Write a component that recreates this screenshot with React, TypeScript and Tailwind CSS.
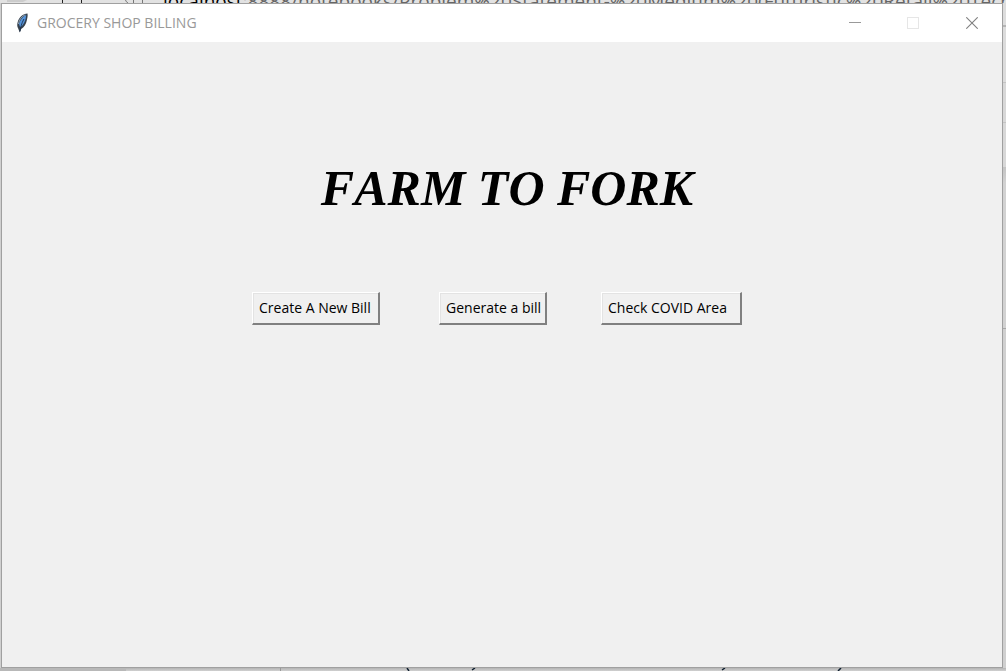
import type { ReactNode } from "react";

function FeatherIcon() {
  return (
    <svg className="h-5 w-4 shrink-0" viewBox="0 0 16 20" aria-hidden="true">
      <path d="M13.5 0.5 C9 0.5 5 4.5 3.7 9 C3 11.5 3 13.8 4.2 15.5 L5.7 19.5 L7.2 16 C10 14.5 12.2 11 12.8 7.5 C13.3 5 14 3 13.5 0.5Z" fill="#36414d" />
      <path d="M12.2 2 C8.5 3.5 6 7.5 5 11 L6.2 14.2 C9.8 12 11.7 7.5 12.2 2Z" fill="#5594dc" />
      <path d="M10 6 C8.5 8.5 7 12 6 18.5" fill="none" stroke="#1b3048" strokeWidth="0.9" />
      <path d="M11.3 1.8 C7.8 3 5.2 6.5 4.4 11" fill="none" stroke="#9aa9b8" strokeWidth="0.9" />
    </svg>
  );
}

function TitleBar() {
  return (
    <header className="flex h-[38px] shrink-0 items-center bg-white pl-3">
      <FeatherIcon />
      <h2 className="grow pb-px pl-[7px] text-sm leading-5 text-[#999999]">GROCERY SHOP BILLING</h2>
      <button type="button" aria-label="Minimize" className="flex h-full w-[58px] items-center justify-center">
        <svg className="size-3" viewBox="0 0 12 12" shapeRendering="crispEdges">
          <path d="M0 5.5H12" stroke="#999999" />
        </svg>
      </button>
      <button type="button" aria-label="Maximize" disabled className="flex h-full w-[58px] items-center justify-center">
        <svg className="size-3" viewBox="0 0 12 12" fill="none" shapeRendering="crispEdges">
          <rect x="0.5" y="0.5" width="11" height="11" stroke="#e6e6e6" />
        </svg>
      </button>
      <button type="button" aria-label="Close" className="flex h-full w-[60px] items-center justify-center">
        <svg className="size-3" viewBox="0 0 12 12" fill="none">
          <path d="M0.3 0.3L11.7 11.7M11.7 0.3L0.3 11.7" stroke="#808080" strokeWidth="1.1" />
        </svg>
      </button>
    </header>
  );
}

function ActionButton({ children, className }: { children: ReactNode; className: string }) {
  return (
    <button
      type="button"
      className={`h-[33px] whitespace-nowrap border-t border-l border-r-2 border-b-2 border-t-white border-l-white border-r-[#808080] border-b-[#808080] bg-[#f0f0f0] pb-px pl-[6px] text-left text-sm leading-5 text-black shadow-[inset_1px_1px_0_#e3e3e3] ${className}`}
    >
      {children}
    </button>
  );
}

export default function App() {
  return (
    <div className="flex h-screen flex-col overflow-hidden bg-[#d0d0d0] font-['Open_Sans','Noto_Sans',sans-serif]">
      <div className="flex h-[3px] shrink-0 overflow-hidden bg-[#e2e2e2]">
        <svg className="h-[3px] w-[163px] shrink-0" viewBox="0 0 163 3" fill="none" aria-hidden="true">
          <path d="M7 0H27L23 2H7Z" fill="#cccccc" />
          <path d="M62.5 0V3M81.5 0V3" stroke="#222222" />
          <path d="M125.5 0Q126 2 128 3M133.5 0V3M142.5 0V3" stroke="#777777" />
        </svg>
        <p className="-mt-[11px] whitespace-nowrap text-[19px] leading-6 text-[#666666]">
          <span className="text-black">localhost</span>:8888/notebooks/Problem%20Statement-%20Medium%20(Futuristic%20Retail%20Tech
        </p>
      </div>
      <div className="flex min-h-0 grow pl-px">
        <main className="flex grow flex-col border border-[#a0a0a0] bg-[#f0f0f0]">
          <TitleBar />
          <div className="flex grow flex-col items-center pt-[116px]">
            <h1 className="pl-[10px] font-['Liberation_Serif',serif] text-[50px] leading-[60px] font-bold italic text-black [font-kerning:none]">FARM TO FORK</h1>
            <div className="mt-[74px] flex pr-[10px]">
              <ActionButton className="w-32">Create A New Bill</ActionButton>
              <ActionButton className="ml-[59px] w-[108px]">Generate a bill</ActionButton>
              <ActionButton className="ml-[54px] w-[141px]">Check COVID Area</ActionButton>
            </div>
          </div>
        </main>
        <div className="flex w-[3px] shrink-0 flex-col">
          <div className="h-6 border-b-2 border-[#b5b5b5] bg-[#dddddd]" />
          <div className="h-14 border-b border-[#c4c4c4] bg-[#dcdcdc]" />
          <div className="h-10 border-b border-[#c4c4c4] bg-[#d8d8d8]" />
          <div className="h-11 bg-[#d8d8d8]" />
          <div className="h-[162px] border-b border-[#a8a8a8] bg-linear-to-b from-[#c4c4c4] to-[#d2d2d2] to-10%" />
          <div className="grow bg-[#d0d0d0]" />
        </div>
      </div>
      <div className="flex h-[3px] shrink-0 bg-linear-to-b from-[#b4b4b4] to-[#d0d0d0]">
        <div className="w-[126px] bg-[#b8b8b8]" />
        <div className="w-[155px] border-r border-[#999999]" />
        <svg className="h-[3px] w-[600px]" viewBox="0 0 600 3" aria-hidden="true">
          <path d="M126 0L128 3M194 0L191 2M444 0L441 2M560 0L557 3" stroke="#102030" strokeWidth="1.5" />
        </svg>
      </div>
    </div>
  );
}
